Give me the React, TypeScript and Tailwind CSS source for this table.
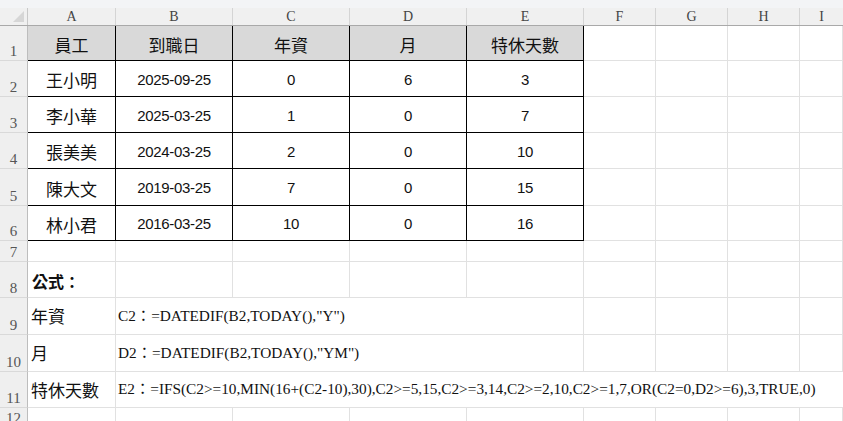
import React from "react";

const cjk = "font-['Noto_Sans_CJK_TC','Noto_Sans',sans-serif]";
const num = "font-['Liberation_Sans','Noto_Sans_CJK_TC',sans-serif]";
const serif = "font-['Liberation_Serif','Noto_Sans_CJK_TC',serif]";

const grid = "border-r border-b border-[#e1e1e1]";
const ink = "border-r border-b border-black";

const RowHead = ({ n, h }: { n: number; h: string }) => (
  <div
    className={`${h} w-[28px] shrink-0 bg-[#efefef] border-r border-r-[#bdbdbd] border-b border-b-[#d9d9d9] flex items-end justify-center pb-[1px] text-[15px] leading-none text-[#555] ${serif}`}
  >
    {n}
  </div>
);

const people = [
  ["王小明", "2025-09-25", "0", "6", "3"],
  ["李小華", "2025-03-25", "1", "0", "7"],
  ["張美美", "2024-03-25", "2", "0", "10"],
  ["陳大文", "2019-03-25", "7", "0", "15"],
  ["林小君", "2016-03-25", "10", "0", "16"],
];

const heights = ["h-[36px]", "h-[36px]", "h-[36px]", "h-[37px]", "h-[35px]"];

const Tail = () => (
  <>
    <div className={`w-[72px] shrink-0 ${grid}`} />
    <div className={`w-[72px] shrink-0 ${grid}`} />
    <div className={`w-[72px] shrink-0 ${grid}`} />
    <div className={`flex-1 ${grid}`} />
  </>
);

const Blank = ({ w }: { w: string }) => <div className={`${w} shrink-0 ${grid}`} />;

export default function App() {
  return (
    <div className="w-[843px] h-[421px] overflow-hidden bg-white text-[#111]">
      <div className="h-[8px] bg-[#f3f4f6]" />

      {/* column letters */}
      <div className={`h-[18px] flex bg-[#f0f0f0] border-b border-[#a9a9a9] text-[14px] leading-none text-[#444] ${serif}`}>
        <div className="w-[28px] shrink-0 border-r border-[#c8c8c8] relative">
          <div className="absolute right-[3px] bottom-[3px] w-0 h-0 border-l-[11px] border-l-transparent border-b-[11px] border-b-[#d6d6d6]" />
        </div>
        {[
          ["A", "w-[88px]"],
          ["B", "w-[117px]"],
          ["C", "w-[117px]"],
          ["D", "w-[117px]"],
          ["E", "w-[117px]"],
          ["F", "w-[72px]"],
          ["G", "w-[72px]"],
          ["H", "w-[72px]"],
        ].map(([c, w]) => (
          <div key={c} className={`${w} shrink-0 border-r border-[#d4d4d4] flex items-center justify-center`}>
            {c}
          </div>
        ))}
        <div className="flex-1 flex items-center justify-center">I</div>
      </div>

      {/* row 1 header */}
      <div className="flex h-[35px]">
        <RowHead n={1} h="h-[35px]" />
        {["員工", "到職日", "年資", "月", "特休天數"].map((t, i) => (
          <div
            key={t}
            className={`${i === 0 ? "w-[88px]" : "w-[117px]"} shrink-0 bg-[#d9d9d9] ${ink} flex items-center justify-center pt-[3px] text-[17px] ${cjk}`}
          >
            {t}
          </div>
        ))}
        <Tail />
      </div>

      {people.map((p, r) => (
        <div key={p[0]} className={`flex ${heights[r]}`}>
          <RowHead n={r + 2} h={heights[r]} />
          <div className={`w-[88px] shrink-0 ${ink} flex items-center justify-center pt-[3px] text-[17px] ${cjk}`}>
            {p[0]}
          </div>
          {p.slice(1).map((v, i) => (
            <div
              key={i}
              className={`w-[117px] shrink-0 ${ink} flex items-center justify-center pt-[3px] text-[15px] tracking-[-0.3px] ${num}`}
            >
              {v}
            </div>
          ))}
          <Tail />
        </div>
      ))}

      {/* row 7 */}
      <div className="flex h-[21px]">
        <RowHead n={7} h="h-[21px]" />
        <Blank w="w-[88px]" />
        <Blank w="w-[117px]" />
        <Blank w="w-[117px]" />
        <Blank w="w-[117px]" />
        <Blank w="w-[117px]" />
        <Tail />
      </div>

      {/* row 8 */}
      <div className="flex h-[36px]">
        <RowHead n={8} h="h-[36px]" />
        <div className={`w-[88px] shrink-0 ${grid} flex items-center pl-[4px] pt-[2px] text-[16px] font-bold ${cjk}`}>
          公式：
        </div>
        <Blank w="w-[117px]" />
        <Blank w="w-[117px]" />
        <Blank w="w-[117px]" />
        <Blank w="w-[117px]" />
        <Tail />
      </div>

      {/* rows 9, 10 */}
      {[
        [9, "年資", "C2：=DATEDIF(B2,TODAY(),\"Y\")"],
        [10, "月", "D2：=DATEDIF(B2,TODAY(),\"YM\")"],
      ].map(([n, label, f]) => (
        <div key={n as number} className="flex h-[37px]">
          <RowHead n={n as number} h="h-[37px]" />
          <div className={`w-[88px] shrink-0 ${grid} flex items-center pl-[3px] text-[17px] ${cjk}`}>{label}</div>
          <div className={`w-[468px] shrink-0 ${grid} flex items-center pl-[2px] text-[15.3px] whitespace-nowrap ${serif}`}>
            {f}
          </div>
          <Tail />
        </div>
      ))}

      {/* row 11 */}
      <div className="flex h-[36px]">
        <RowHead n={11} h="h-[36px]" />
        <div className={`w-[88px] shrink-0 ${grid} flex items-center pl-[3px] text-[17px] ${cjk}`}>特休天數</div>
        <div className={`flex-1 border-b border-[#e1e1e1] flex items-center pl-[2px] text-[15.3px] whitespace-nowrap ${serif}`}>
          E2：=IFS(C2&gt;=10,MIN(16+(C2-10),30),C2&gt;=5,15,C2&gt;=3,14,C2&gt;=2,10,C2&gt;=1,7,OR(C2=0,D2&gt;=6),3,TRUE,0)
        </div>
      </div>

      {/* row 12 */}
      <div className="flex h-[20px]">
        <RowHead n={12} h="h-[20px]" />
        <Blank w="w-[88px]" />
        <Blank w="w-[117px]" />
        <Blank w="w-[117px]" />
        <Blank w="w-[117px]" />
        <Blank w="w-[117px]" />
        <Tail />
      </div>
    </div>
  );
}
